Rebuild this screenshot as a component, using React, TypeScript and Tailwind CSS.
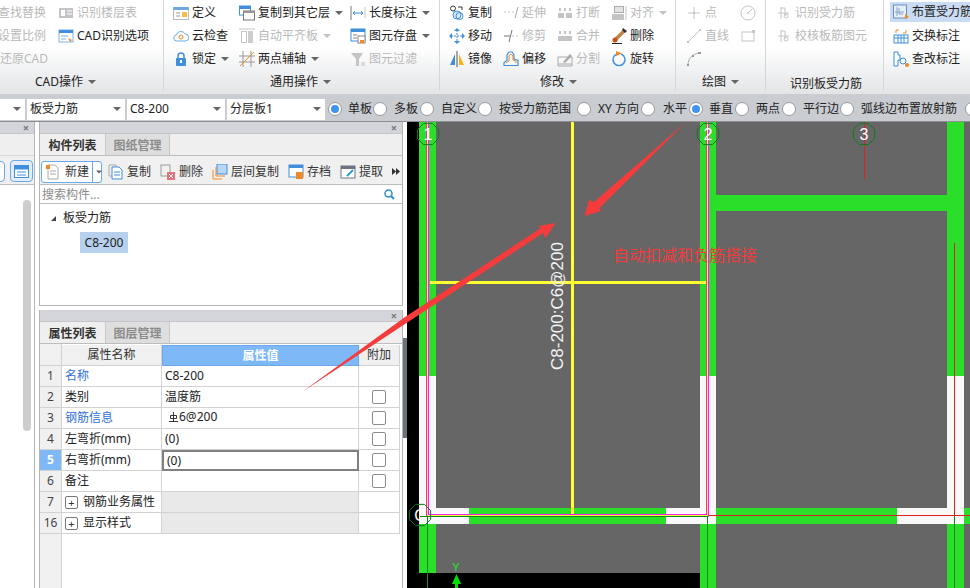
import React from "react";

const font = "font-['Noto_Sans','Noto_Sans_CJK_SC',sans-serif]";

const G = "#c4c4c4";
const B = "#3f8fdc";
const O = "#f08a24";
const D = "#6b7480";

const Svg = ({ children }: { children: React.ReactNode }) => (
    <svg width="16" height="16" viewBox="0 0 16 16" fill="none" className="shrink-0">
        {children}
    </svg>
);

const icons: Record<string, React.ReactNode> = {
    find: <Svg><rect x="1" y="3" width="14" height="10" fill={G} /><rect x="3" y="5" width="4" height="6" fill="#fff" /><path d="M9 6h5M9 9h5" stroke="#fff" /></Svg>,
    cadopt: <Svg><rect x="1" y="2" width="14" height="12" fill="#fff" stroke="#7fb0e6" /><rect x="1" y="2" width="14" height="3" fill={B} /><path d="M10 10l4 2-2 2z" fill={O} /><path d="M3 8h7M3 11h5" stroke="#7fb0e6" /></Svg>,
    define: <Svg><rect x="0.5" y="2.5" width="15" height="12" fill="#fff" stroke="#bbb" /><rect x="0.5" y="2" width="15" height="3" fill="#6fa8e0" /><path d="M3 8h4M3 11h4" stroke="#999" /><rect x="9" y="7" width="5" height="5" fill="#f5c04a" /></Svg>,
    cloud: <Svg><path d="M4 13a3 3 0 0 1-.5-6A4.5 4.5 0 0 1 12 6a3.5 3.5 0 0 1 .5 7z" stroke="#6aaee8" fill="#fff" /><circle cx="8" cy="9" r="2" stroke={O} /></Svg>,
    lock: <Svg><path d="M5 7V5a3 3 0 0 1 6 0v2" stroke={B} strokeWidth="1.5" /><rect x="3" y="7" width="10" height="8" rx="1" fill={B} /><rect x="7" y="9" width="2" height="3" fill="#fff" /></Svg>,
    copyLayer: <Svg><rect x="0.5" y="1" width="11" height="9" fill="#fff" stroke={B} /><rect x="0.5" y="1" width="11" height="3" fill={B} /><rect x="4.5" y="6" width="11" height="9" fill="#fff" stroke="#777" /><rect x="4.5" y="6" width="11" height="2" fill="#999" /></Svg>,
    align: <Svg><rect x="2.5" y="3.5" width="5" height="11" fill="#fff" stroke={G} /><rect x="9" y="3" width="5" height="12" fill="#ccc" /><path d="M0 1h16" stroke={G} /></Svg>,
    axis: <Svg><path d="M4 0v16M12 0v16M0 5h16M0 11h16" stroke="#999" /><path d="M1 15L15 1" stroke={O} /></Svg>,
    length: <Svg><path d="M1 1v14" stroke="#777" /><path d="M15 2v11" stroke={G} /><path d="M3 8h10M5 6L3 8l2 2M11 6l2 2-2 2" stroke={B} /></Svg>,
    store: <Svg><rect x="1" y="1" width="14" height="12" fill="#fff" stroke={B} /><rect x="1" y="1" width="14" height="3" fill={B} /><path d="M3 7h4M3 10h4" stroke="#888" /><rect x="8" y="8" width="7" height="7" fill="#fff" stroke="#888" /><rect x="10" y="12" width="4" height="3" fill={O} /></Svg>,
    filter: <Svg><path d="M1 2h12L9 8v7H6V8z" fill={G} /><path d="M11 12h4M11 14h4" stroke={G} /></Svg>,
    copy: <Svg><circle cx="4" cy="3.5" r="2.5" stroke="#333" fill="#fff" /><circle cx="8" cy="10" r="4" stroke={B} fill="#d7e8f8" /><circle cx="10.5" cy="11" r="3.5" stroke={B} /><path d="M9 2h4v3" stroke="#333" /></Svg>,
    move: <Svg><path d="M8 2v12M2 8h12" stroke={B} strokeDasharray="2 1" /><path d="M8 0l3 3H5zM8 16l3-3H5zM0 8l3-3v6zM16 8l-3-3v6z" fill={B} /></Svg>,
    mirror: <Svg><path d="M8 0v16" stroke="#555" /><path d="M6 3v11H1z" fill={B} /><path d="M10 3v11h5z" fill="#f7b21c" /></Svg>,
    extend: <Svg><path d="M1 7h2M5 7h2M9 7h2" stroke={G} /><path d="M15 2l-3 11" stroke="#aaa" /></Svg>,
    trim: <Svg><path d="M1 8h6" stroke="#777" /><path d="M9 8h2M13 8h2" stroke={G} /><path d="M9 2L6 14" stroke="#777" /></Svg>,
    offset: <Svg><path d="M1 14.5v-3l3-2V4l2-3h3l2 3v4l4 1.5v5z" stroke={B} strokeWidth="1.2" /><path d="M3 12l3-2V5l1-1.5h1.5L10 5v4l3 1.5v1.5" stroke={O} /></Svg>,
    breakIcon: <Svg><rect x="1" y="8" width="6" height="5" fill={G} /><rect x="9" y="8" width="6" height="5" fill={G} /><rect x="2" y="3" width="2" height="3" fill={G} /><rect x="7" y="3" width="2" height="3" fill={G} /><rect x="12" y="3" width="2" height="3" fill={G} /></Svg>,
    merge: <Svg><rect x="1" y="8" width="14" height="5" fill={G} /><rect x="2" y="3" width="2" height="3" fill={G} /><rect x="7" y="3" width="2" height="3" fill={G} /><rect x="12" y="3" width="2" height="3" fill={G} /></Svg>,
    split: <Svg><path d="M1 15V6h14v9zM1 13h14" stroke="#aaa" /><path d="M6 11l7-8 2 2-7 7z" fill="#aaa" /></Svg>,
    alignTop: <Svg><rect x="3.5" y="1.5" width="9" height="6" fill="#e4e4e4" stroke="#aaa" /><rect x="1" y="9" width="12" height="6" fill={G} /><path d="M15 1v14" stroke={G} /></Svg>,
    del: <Svg><path d="M5 11L13 3" stroke="#b9854a" strokeWidth="3.5" /><path d="M12 0l4 3-2 2-3-3z" fill="#333" /><path d="M1 15.5h10" stroke="#222" /><circle cx="4" cy="12" r="2.5" fill="#c9501a" /></Svg>,
    rotate: <Svg><path d="M6 3a6 6 0 1 0 4 0" stroke={B} strokeWidth="1.4" /><path d="M5 0l6 2.5L5 5z" fill={O} /></Svg>,
    point: <Svg><path d="M8 2v12M2 8h12" stroke={G} /><rect x="7" y="7" width="2" height="2" fill={G} /></Svg>,
    line: <Svg><path d="M2 14L14 2" stroke={G} /><rect x="1" y="13" width="2" height="2" fill={G} /><rect x="13" y="1" width="2" height="2" fill={G} /></Svg>,
    arc: <Svg><path d="M2 14C2 7 7 3 13 2" stroke="#aaa" /><rect x="1" y="13" width="2" height="2" fill="#999" /><rect x="12" y="1" width="3" height="2" fill="#999" /><rect x="6" y="4" width="2" height="2" fill="#999" /></Svg>,
    circle: <Svg><circle cx="8" cy="8" r="7" stroke={G} /><circle cx="8" cy="8" r="1" fill={G} /><path d="M8 8l4-4" stroke={G} /></Svg>,
    rect: <Svg><rect x="2" y="4" width="12" height="9" stroke={G} /><rect x="12" y="2" width="3" height="3" fill={G} /></Svg>,
    rebar: <Svg><path d="M5 2v12M2 8h11M5 3h4v8" stroke={G} /><circle cx="10" cy="11" r="2" stroke={G} /></Svg>,
    place: <Svg><rect x="0.5" y="1" width="13" height="13" fill="#e6eefa" stroke="#6b8fb8" /><path d="M4 3v9M2 8h9M6 4v6h4" stroke="#8aa4c4" /><path d="M12 10l4 3-4 2z" fill={O} /></Svg>,
    swap: <Svg><rect x="1" y="7" width="14" height="8" fill="#fff" stroke={B} /><path d="M1 10h14M5 7v8M8 7v8M11 7v8" stroke={B} /><path d="M3 5V2h3M13 2v3h-3" stroke={O} /></Svg>,
    review: <Svg><path d="M1 1h4v3h2v5H5v6H1z" fill="#fff" stroke={B} /><circle cx="10" cy="10" r="3" stroke={B} /><circle cx="14" cy="14" r="2" fill={O} /></Svg>,
};

function Caret({ className = "" }: { className?: string }) {
    return <span className={`inline-block w-0 h-0 border-x-[4px] border-x-transparent border-t-[4px] border-t-[#666] ${className}`}></span>;
}

type ToolProps = { icon: string; text: string; off?: boolean; caret?: boolean };

function Tool({ icon, text, off, caret }: ToolProps) {
    return (
        <div className="flex items-center h-[23px] whitespace-nowrap">
            {icons[icon]}
            <span className={`ml-[3px] text-[12px] ${off ? "text-[#b9b9b9]" : "text-[#222]"}`}>{text}</span>
            {caret && <Caret className={`ml-[5px] ${off ? "opacity-40" : ""}`} />}
        </div>
    );
}

function Group({ label, width, caret = true, labelClass, children }: { label: string; width: string; caret?: boolean; labelClass: string; children: React.ReactNode }) {
    return (
        <div className={`${width} shrink-0 h-[91px] flex flex-col border-r border-[#d4d6d9]`}>
            <div className="flex h-[70px] pt-px">{children}</div>
            <div className={`flex items-center h-[21px] pt-[3px] text-[12px] text-[#222] ${labelClass}`}>
                {label}
                {caret && <Caret className="ml-[5px]" />}
            </div>
        </div>
    );
}

function Ribbon() {
    return (
        <div className="flex h-[94px] bg-gradient-to-b from-white via-white to-[#e2e4e6] overflow-hidden">
            <Group label="CAD操作" width="w-[164px]" labelClass="pl-[35px]">
                <div className="w-[58px] flex flex-col text-[12px] text-[#b9b9b9] -ml-[2px] mr-[2px]">
                    <div className="h-[23px] flex items-center">查找替换</div>
                    <div className="h-[23px] flex items-center">设置比例</div>
                    <div className="h-[23px] flex items-center pl-[2px]">还原CAD</div>
                </div>
                <div className="flex flex-col">
                    <Tool icon="find" text="识别楼层表" off />
                    <Tool icon="cadopt" text="CAD识别选项" />
                </div>
            </Group>
            <Group label="通用操作" width="w-[276px]" labelClass="pl-[106px]">
                <div className="w-[75px] pl-[9px] flex flex-col">
                    <Tool icon="define" text="定义" />
                    <Tool icon="cloud" text="云检查" />
                    <Tool icon="lock" text="锁定" caret />
                </div>
                <div className="w-[111px] flex flex-col">
                    <Tool icon="copyLayer" text="复制到其它层" caret />
                    <Tool icon="align" text="自动平齐板" off caret />
                    <Tool icon="axis" text="两点辅轴" caret />
                </div>
                <div className="flex flex-col">
                    <Tool icon="length" text="长度标注" caret />
                    <Tool icon="store" text="图元存盘" caret />
                    <Tool icon="filter" text="图元过滤" off />
                </div>
            </Group>
            <Group label="修改" width="w-[236px]" labelClass="pl-[100px]">
                <div className="w-[63px] pl-[9px] flex flex-col">
                    <Tool icon="copy" text="复制" />
                    <Tool icon="move" text="移动" />
                    <Tool icon="mirror" text="镜像" />
                </div>
                <div className="w-[54px] flex flex-col">
                    <Tool icon="extend" text="延伸" off />
                    <Tool icon="trim" text="修剪" off />
                    <Tool icon="offset" text="偏移" />
                </div>
                <div className="w-[54px] flex flex-col">
                    <Tool icon="breakIcon" text="打断" off />
                    <Tool icon="merge" text="合并" off />
                    <Tool icon="split" text="分割" off />
                </div>
                <div className="flex flex-col">
                    <Tool icon="alignTop" text="对齐" off caret />
                    <Tool icon="del" text="删除" />
                    <Tool icon="rotate" text="旋转" />
                </div>
            </Group>
            <Group label="绘图" width="w-[90px]" labelClass="pl-[26px]">
                <div className="w-[64px] pl-[10px] flex flex-col">
                    <Tool icon="point" text="点" off />
                    <Tool icon="line" text="直线" off />
                    <div className="h-[23px] flex items-center">{icons.arc}</div>
                </div>
                <div className="flex flex-col">
                    <div className="h-[23px] flex items-center">{icons.circle}</div>
                    <div className="h-[23px] flex items-center">{icons.rect}</div>
                </div>
            </Group>
            <Group label="识别板受力筋" width="w-[118px]" caret={false} labelClass="pl-[24px] pt-[6px]">
                <div className="pl-[10px] flex flex-col">
                    <Tool icon="rebar" text="识别受力筋" off />
                    <Tool icon="rebar" text="校核板筋图元" off />
                </div>
            </Group>
            <div className="flex-1 pl-[6px] pt-px flex flex-col min-w-0">
                <div className="bg-[#c9dcf3] pl-[3px] h-[20px] flex items-center mt-px mb-[2px]">
                    <Tool icon="place" text="布置受力筋" />
                </div>
                <div className="pl-[3px]">
                    <Tool icon="swap" text="交换标注" />
                    <Tool icon="review" text="查改标注" />
                </div>
            </div>
        </div>
    );
}

function Select({ text, width }: { text: string; width: string }) {
    return (
        <div className={`${width} h-[21px] bg-white flex items-center justify-between pl-[3px] pr-[4px] text-[12px] text-[#222] shrink-0`}>
            <span>{text}</span>
            <Caret />
        </div>
    );
}

function Radio({ on, className = "" }: { on?: boolean; className?: string }) {
    return (
        <span className={`w-[14px] h-[14px] rounded-full bg-white border border-[#9a9a9a] flex items-center justify-center shrink-0 ${className}`}>
            {on && <span className="w-[8px] h-[8px] rounded-full bg-[#3f94f0]"></span>}
        </span>
    );
}

function OptionBar() {
    return (
        <div className="flex items-center h-[28px] pt-[3px] bg-[#c9ccd1] text-[12px] text-[#222] whitespace-nowrap overflow-hidden border-b border-[#8d8f92]">
            <Select text="" width="w-[25px]" />
            <Select text="板受力筋" width="w-[98px] ml-[2px]" />
            <Select text="C8-200" width="w-[98px] ml-[2px]" />
            <Select text="分层板1" width="w-[98px] ml-[2px]" />
            <Radio on className="ml-[3px]" />
            <span className="ml-[6px]">单板</span>
            <Radio className="ml-px" />
            <span className="ml-[7px]">多板</span>
            <Radio className="ml-[2px]" />
            <span className="ml-[7px]">自定义</span>
            <Radio className="ml-px" />
            <span className="ml-[7px]">按受力筋范围</span>
            <span className="w-px h-[21px] bg-[#aeb1b5] ml-[2px]"></span>
            <Radio className="ml-[4px]" />
            <span className="ml-[7px]">XY 方向</span>
            <Radio className="ml-[2px]" />
            <span className="ml-[8px]">水平</span>
            <Radio on className="ml-[2px]" />
            <span className="ml-[6px]">垂直</span>
            <Radio className="ml-[2px]" />
            <span className="ml-[7px]">两点</span>
            <Radio className="ml-[2px]" />
            <span className="ml-[7px]">平行边</span>
            <Radio className="ml-px" />
            <span className="ml-[7px]">弧线边布置放射筋</span>
            <Radio className="ml-[8px]" />
        </div>
    );
}

function TitleBar() {
    return (
        <div className="h-[12px] bg-[#d3d5da] border-b border-[#c4c6ca] flex items-center justify-end pr-[5px] text-[#777] text-[11px] leading-none font-bold shrink-0">
            ×
        </div>
    );
}

function Tabs({ active, other }: { active: string; other: string }) {
    return (
        <div className="h-[22px] bg-[#efefef] border-b border-[#bdbdbd] flex text-[12px] font-bold shrink-0">
            <div className="w-[65px] flex items-center justify-center text-[#333] pt-[2px]">{active}</div>
            <div className="w-[65px] flex items-center justify-center text-[#8c8c8c] bg-[#dedede] border-x border-[#c8c8c8] pt-[2px]">{other}</div>
        </div>
    );
}

function SmallTool({ text, children, gap }: { text: string; children: React.ReactNode; gap: string }) {
    return (
        <div className={`flex items-center ${gap} text-[12px] text-[#333]`}>
            <Svg>{children}</Svg>
            <span className="ml-[3px]">{text}</span>
        </div>
    );
}

function ComponentPanel() {
    return (
        <div className="h-[184px] flex flex-col border-x border-b border-[#b5b5b5] bg-white">
            <TitleBar />
            <Tabs active="构件列表" other="图纸管理" />
            <div className="h-[29px] pt-[3px] bg-[#f0f0f0] border-b border-[#bdbdbd] flex items-center pl-[1px] whitespace-nowrap shrink-0">
                <div className="h-[22px] w-[61px] bg-white border border-[#6aa8ea] rounded-[3px] flex items-center text-[12px] text-[#333]">
                    <span className="ml-[3px]"><Svg><path d="M3 1h7l3 3v11H3z" fill="#fff" stroke="#aaa" /><path d="M5 7h6M5 10h6" stroke="#aaa" /><rect x="1" y="1" width="4" height="4" fill={O} /></Svg></span>
                    <span className="ml-[4px]">新建</span>
                    <span className="ml-[3px] h-full border-l border-[#6aa8ea] pl-[2px] flex items-center"><Caret className="scale-75" /></span>
                </div>
                <SmallTool text="复制" gap="ml-[6px]"><path d="M1 1h7v11H1z" stroke="#aaa" /><path d="M4 3h7l3 3v9H4z" fill="#fff" stroke={B} /><path d="M6 8h6M6 11h6" stroke={B} /></SmallTool>
                <SmallTool text="删除" gap="ml-[9px]"><rect x="1" y="1" width="9" height="11" stroke="#999" /><rect x="7" y="8" width="8" height="8" fill="#e2747a" /><path d="M9 10l4 4M13 10l-4 4" stroke="#fff" /></SmallTool>
                <SmallTool text="层间复制" gap="ml-[9px]"><rect x="5" y="0" width="10" height="10" fill="#b9d6f6" stroke={B} /><path d="M4 3v9h9M1 6v9h9" stroke={O} /></SmallTool>
                <SmallTool text="存档" gap="ml-[9px]"><rect x="1" y="1" width="14" height="12" fill="#fff" stroke={B} /><rect x="1" y="1" width="14" height="3" fill={B} /><rect x="8" y="8" width="7" height="7" fill={O} /></SmallTool>
                <SmallTool text="提取" gap="ml-[9px]"><rect x="1" y="2" width="14" height="12" fill="#fff" stroke={D} /><rect x="1" y="2" width="14" height="3" fill={D} /><path d="M7 12l6-6" stroke="#2a9bd0" strokeWidth="2" /></SmallTool>
                <svg className="ml-[9px]" width="8" height="7" viewBox="0 0 8 7"><path d="M0 0l4 3.5L0 7zM4 0l4 3.5L4 7z" fill="#333" /></svg>
            </div>
            <div className="h-[19px] pt-px border-b border-[#bdbdbd] flex items-center justify-between pl-[2px] pr-[7px] text-[12px] text-[#8a8a8a] shrink-0">
                <span>搜索构件...</span>
                <svg width="11" height="11" viewBox="0 0 11 11" fill="none"><circle cx="4.5" cy="4.5" r="3.5" stroke="#2f8fc8" strokeWidth="1.5" /><path d="M7 7l3 3" stroke="#2f8fc8" strokeWidth="2" /></svg>
            </div>
            <div className="flex-1 pt-[3px] text-[12px] text-[#222]">
                <div className="flex items-center h-[22px] pl-[11px]">
                    <span className="w-0 h-0 border-l-[5px] border-l-transparent border-b-[5px] border-b-[#444]"></span>
                    <span className="ml-[7px]">板受力筋</span>
                </div>
                <div className="ml-[40px] mt-[3px] w-[48px] h-[21px] bg-[#b7d0ee] flex items-center justify-center">C8-200</div>
            </div>
        </div>
    );
}

const rows = [
    { no: "1", name: "名称", value: "C8-200", blue: true, hideCheck: true },
    { no: "2", name: "类别", value: "温度筋" },
    { no: "3", name: "钢筋信息", value: "6@200", blue: true, rebar: true },
    { no: "4", name: "左弯折(mm)", value: "(0)" },
    { no: "5", name: "右弯折(mm)", value: "(0)", focus: true },
    { no: "6", name: "备注", value: "" },
    { no: "7", name: "钢筋业务属性", value: "", group: true },
    { no: "16", name: "显示样式", value: "", group: true },
];

function PropertyPanel() {
    const cell = "flex items-center text-[12px] h-[21px]";
    const line = "border-r border-b border-[#d2d2d2]";
    return (
        <div className="flex-1 mt-[4px] flex flex-col border-x border-[#b5b5b5] bg-white overflow-hidden">
            <TitleBar />
            <Tabs active="属性列表" other="图层管理" />
            <div className="relative flex-1 pr-[2px]">
                <div className="absolute left-0 top-0 bottom-0 w-[22px] bg-[#f0f0f0] border-r border-[#d2d2d2]"></div>
                <div className="relative grid grid-cols-[22px_100px_197px_41px] mt-px">
                    <div className={`${cell} ${line} bg-[#f0f0f0]`}></div>
                    <div className={`${cell} ${line} bg-[#f0f0f0] justify-center text-[#333]`}>属性名称</div>
                    <div className={`${cell} border border-[#6aa8ea] bg-[#7eb8f6] justify-center text-white font-bold`}>属性值</div>
                    <div className={`${cell} ${line} bg-[#f0f0f0] justify-center text-[#333]`}>附加</div>
                    {rows.map((r) => (
                        <React.Fragment key={r.no}>
                            <div className={`${cell} ${line} justify-center ${r.focus ? "bg-[#7eb8f6] text-white font-bold" : "bg-[#f0f0f0] text-[#444]"}`}>{r.no}</div>
                            <div className={`${cell} ${line} pl-[3px] ${r.blue ? "text-[#2f6fdc]" : "text-[#222]"}`}>
                                {r.group && <span className="w-[13px] h-[13px] mr-[5px] border border-[#777] rounded-[2px] flex items-center justify-center text-[11px] leading-none text-[#333]">+</span>}
                                {r.name}
                            </div>
                            <div className={`${cell} pl-[3px] text-[#222] ${r.focus ? "border-[2px] border-[#808080]" : line} ${r.group ? "bg-[#e9e9e9]" : ""}`}>
                                {r.rebar ? (
                                    <span className="flex items-center ml-[4px] -mt-[2px]">
                                        <svg width="9" height="10" viewBox="0 0 9 10" fill="none" className="mr-[1px]"><path d="M1.5 3.5v3h6v-3zM4.5 0v10M0 9.5h9" stroke="#222" strokeWidth="0.9" /></svg>
                                        {r.value}
                                    </span>
                                ) : (
                                    r.value
                                )}
                            </div>
                            <div className={`${cell} ${line} justify-center`}>
                                {!r.hideCheck && !r.group && <span className="w-[14px] h-[14px] border border-[#8c8c8c] rounded-[2px] bg-white"></span>}
                            </div>
                        </React.Fragment>
                    ))}
                </div>
            </div>
        </div>
    );
}

function SidePanel() {
    return (
        <div className="w-[35px] shrink-0 h-full flex flex-col border-r border-[#b5b5b5] bg-white overflow-hidden">
            <TitleBar />
            <div className="h-[22px] bg-[#efefef] border-b border-[#d8d8d8] shrink-0"></div>
            <div className="h-[29px] pt-[2px] bg-[#f0f0f0] border-b border-[#bdbdbd] flex items-center -ml-[6px] shrink-0">
                <span className="w-[11px] h-[21px] bg-white border border-[#6aa8ea] rounded-[4px]"></span>
                <span className="ml-[5px] w-[23px] h-[22px] bg-[#e4eefa] border border-[#6aa8ea] rounded-[4px] flex items-center justify-center shrink-0">
                    <svg width="15" height="13" viewBox="0 0 15 13"><rect x="0.5" y="0.5" width="14" height="12" fill="#fff" stroke={B} /><rect x="0.5" y="0.5" width="14" height="4" fill={B} /><path d="M3 7h9M3 10h9" stroke={B} /></svg>
                </span>
            </div>
            <div className="flex-1 relative">
                <div className="absolute left-[23px] top-[15px] w-[8px] h-[231px] rounded-[4px] bg-[#cdcdcd]"></div>
            </div>
        </div>
    );
}

function Octagon({ cx, cy, label }: { cx: number; cy: number; label: string }) {
    const r = 11.5;
    const pts = Array.from({ length: 8 }, (_, i) => {
        const a = (Math.PI / 8) * (2 * i + 1);
        return `${cx + r * Math.cos(a)},${cy + r * Math.sin(a)}`;
    }).join(" ");
    return (
        <g>
            <polygon points={pts} fill="none" stroke="#0b7a1c" strokeWidth="1" />
            <text x={cx} y={cy + 6} textAnchor="middle" fontSize="16" fill="#fff" fontFamily="Liberation Sans, sans-serif">{label}</text>
        </g>
    );
}

function CadCanvas() {
    const green = "#2ade2a";
    const white = "#f8f8f8";
    return (
        <div className="flex-1 min-w-0 h-full bg-[#666666]">
            <svg viewBox="407 122 563 466" className="block w-full h-full" shapeRendering="crispEdges">
                <rect x="407" y="122" width="12" height="466" fill="#000" />
                <rect x="407" y="573" width="293" height="15" fill="#000" />
                {/* walls */}
                <rect x="419" y="122" width="17" height="254" fill={green} />
                <rect x="419" y="376" width="17" height="148" fill={white} />
                <rect x="419" y="524" width="17" height="49" fill={green} />
                <rect x="700" y="122" width="16" height="254" fill={green} />
                <rect x="700" y="376" width="16" height="148" fill={white} />
                <rect x="700" y="524" width="16" height="64" fill={green} />
                <rect x="947" y="122" width="17" height="254" fill={green} />
                <rect x="947" y="376" width="17" height="148" fill={white} />
                <rect x="947" y="524" width="17" height="64" fill={green} />
                <rect x="716" y="195" width="231" height="16" fill={green} />
                <rect x="436" y="508" width="33" height="16" fill={white} />
                <rect x="469" y="508" width="197" height="16" fill={green} />
                <rect x="666" y="508" width="34" height="16" fill={white} />
                <rect x="716" y="508" width="181" height="16" fill={green} />
                <rect x="897" y="508" width="50" height="16" fill={white} />
                <rect x="964" y="508" width="6" height="16" fill={green} />
                {/* slab rebar outline */}
                <path d="M427 122V515H707V122" fill="none" stroke="#ff19ff" strokeWidth="3" />
                <path d="M427 122V515H707V122" fill="none" stroke="#ffff33" strokeWidth="1" />
                <rect x="571" y="122" width="3" height="392" fill="#ffff33" />
                <rect x="430" y="281" width="276" height="3" fill="#ffff33" />
                {/* axes */}
                <path d="M419.5 516.5H707.5M427.5 516V588M707.5 516V588M954.5 516V588" stroke="#0b8a1c" fill="none" />
                <path d="M864.5 122V179M954.5 243V516M709 515.5H970" stroke="#e02020" fill="none" />
                <g shapeRendering="auto">
                    <Octagon cx={428} cy={134} label="1" />
                    <Octagon cx={708} cy={134} label="2" />
                    <Octagon cx={864} cy={134} label="3" />
                    <Octagon cx={420} cy={515} label="C" />
                    <text
                        transform="translate(563 370) rotate(-90)"
                        fontSize="17"
                        fill="#f4f4f4"
                        fontFamily="Liberation Sans, sans-serif"
                    >
                        C8-200:C6@200
                    </text>
                    <text x="456" y="571" textAnchor="middle" fontSize="11" fill="#22e622" fontFamily="Liberation Sans, sans-serif">Y</text>
                    <path d="M456.5 574l4.5 10h-3v4h-3v-4h-3z" fill="#00e000" />
                    <text x="613" y="261" fontSize="16" fill="#f03c3c" fontFamily="Noto Sans CJK SC, sans-serif">自动扣减和负筋搭接</text>
                </g>
            </svg>
        </div>
    );
}

export default function App() {
    return (
        <div className={`relative w-[970px] h-[588px] overflow-hidden bg-white ${font}`}>
            <Ribbon />
            <OptionBar />
            <div className="flex h-[466px]">
                <SidePanel />
                <div className="w-[364px] ml-[4px] shrink-0 h-full flex flex-col">
                    <ComponentPanel />
                    <PropertyPanel />
                </div>
                <div className="relative w-[4px] shrink-0 h-full">
                    <div className="absolute left-0 top-[216px] w-[4px] h-[100px] bg-[#6b7178]"></div>
                </div>
                <CadCanvas />
            </div>
            {/* annotation arrows pasted over the screenshot */}
            <svg className="absolute left-0 top-0 pointer-events-none" width="970" height="588" viewBox="0 0 970 588">
                <polygon points="302,392 405,317 541,228 538.3,226 555.6,223 545.5,238.3 543,233 405,324" fill="#f53b3b" />
                <polygon points="686,122 599.6,208 601,211 584.5,216 589,200 594,202" fill="#f53b3b" />
            </svg>
        </div>
    );
}
